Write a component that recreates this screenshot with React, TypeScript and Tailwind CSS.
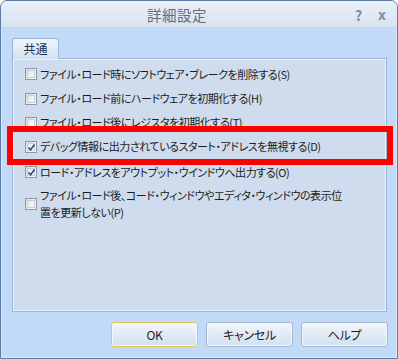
import React from "react";

const font = "[font-family:'Noto_Sans_CJK_JP','Noto_Sans',sans-serif]";
const txt = "text-[11px] leading-[17px] text-[#1c1c1c] [font-feature-settings:'palt'] tracking-[-0.45px]";

function Box({ checked }: { checked?: boolean }) {
  return (
    <div className="relative w-[12px] h-[12px] shrink-0 border border-[#8e99a8] bg-gradient-to-br from-[#dcdfe3] to-[#f7f8f9]">
      <div className="absolute inset-[1px] border border-[#c9ced6] bg-gradient-to-br from-[#e4e7eb] to-[#fbfbfc]" />
      {checked && (
        <svg className="absolute left-[1px] top-[1px]" width="9" height="9" viewBox="0 0 9 9">
          <path d="M1.5 4.5 L3.6 6.8 L7.6 1.5" stroke="#2a4a78" strokeWidth="1.6" fill="none" />
        </svg>
      )}
    </div>
  );
}

function Row({ checked, h, children }: { checked?: boolean; h: string; children: React.ReactNode }) {
  return (
    <div className={`${h} flex items-center gap-[3px] pl-[12px]`}>
      <Box checked={checked} />
      <span className={txt}>{children}</span>
    </div>
  );
}

function Btn({ children, def }: { children: React.ReactNode; def?: boolean }) {
  return (
    <div
      className={
        "w-[87px] h-[25px] rounded-[3px] flex items-center justify-center text-[12px] text-[#1c1c1c] bg-gradient-to-b from-[#f3f7fc] via-[#e1eaf6] to-[#d2e1f2] shadow-[inset_0_0_0_1px_#f4f8fd] " +
        (def ? "border border-[#e2c45f]" : "border border-[#a6b6cc]")
      }
    >
      <span className="[font-feature-settings:'palt'] tracking-[-0.3px]">{children}</span>
    </div>
  );
}

export default function App() {
  return (
    <div className={`w-[398px] h-[359px] relative ${font}`}>
      <div className="w-[398px] h-[359px] border border-[#5d7ba5] rounded-t-[7px] bg-[#c1daf7] flex flex-col overflow-hidden">
        <div className="h-[27px] shrink-0 bg-gradient-to-b from-[#e9eff7] to-[#d9e4f1] border-b border-[#c9d6e6] flex items-center relative">
          <span className="absolute left-[146px] top-[3px] text-[14.5px] text-[#646d78] tracking-[0.5px]">詳細設定</span>
          <span className="absolute left-[354px] top-[4px] text-[14px] font-bold text-[#7d8ba0]">?</span>
          <span className="absolute left-[377px] top-[3px] text-[14px] font-bold text-[#7d8ba0]">x</span>
        </div>
        <div className="flex-1 flex flex-col border-l border-r border-b border-[#d9e8fa] pl-[10px] pr-[8px] pt-[10px]">
          <div className="flex">
            <div className="w-[47px] h-[21px] -mb-[1px] relative z-10 rounded-t-[3px] border border-b-0 border-[#9bb5d6] bg-gradient-to-b from-[#f0f5fb] to-[#d4e1f0] flex items-center justify-center text-[12px] text-[#1b2f57]">
              共通
            </div>
          </div>
          <div className="w-[375px] h-[254px] border border-[#9bb5d6] shadow-[inset_0_0_0_1px_#e6f2fd] bg-[#cedced] pt-[3px]">
            <Row h="h-[24px]">ファイル・ロード時にソフトウェア・ブレークを削除する(S)</Row>
            <Row h="h-[25px]">ファイル・ロード前にハードウェアを初期化する(H)</Row>
            <Row h="h-[23px]">ファイル・ロード後にレジスタを初期化する(T)</Row>
            <Row h="h-[25px]" checked>デバッグ情報に出力されているスタート・アドレスを無視する(D)</Row>
            <Row h="h-[26px]" checked>ロード・アドレスをアウトプット・ウインドウへ出力する(O)</Row>
            <div className="flex items-center gap-[3px] pl-[12px] mt-[2px]">
              <Box />
              <span className={txt}>
                ファイル・ロード後、コード・ウィンドウやエディタ・ウィンドウの表示位
                <br />
                置を更新しない(P)
              </span>
            </div>
          </div>
          <div className="flex justify-end gap-[8px] mt-[10px]">
            <Btn def>OK</Btn>
            <Btn>キャンセル</Btn>
            <Btn>ヘルプ</Btn>
          </div>
        </div>
      </div>
      <div className="absolute left-[7px] top-[126px] w-[386px] h-[39px] border-[6px] border-[#ff0000]" />
    </div>
  );
}
